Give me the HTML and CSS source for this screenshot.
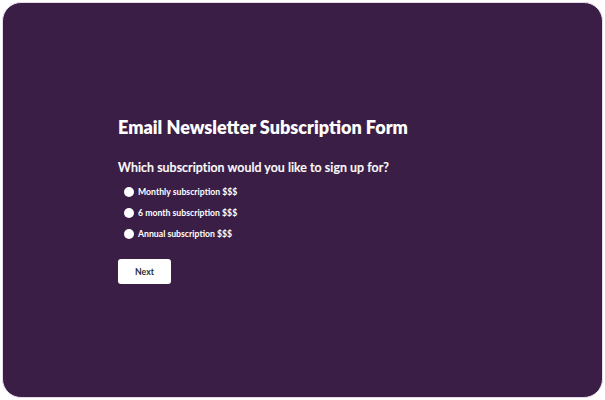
FILE: index.html
```html
<!DOCTYPE html>
<html lang="en">
<head>
<meta charset="utf-8">
<title>Email Newsletter Subscription Form</title>
<link rel="stylesheet" href="styles.css">
</head>
<body>
<div class="frame">
  <form class="survey">
    <h1 class="survey-title">Email Newsletter Subscription Form</h1>
    <h2 class="question">Which subscription would you like to sign up for?</h2>
    <ul class="choices">
      <li class="choice"><span class="dot"></span>Monthly subscription $$$</li>
      <li class="choice"><span class="dot"></span>6 month subscription $$$</li>
      <li class="choice"><span class="dot"></span>Annual subscription $$$</li>
    </ul>
    <button type="button" class="next">Next</button>
  </form>
</div>
</body>
</html>
```
FILE: styles.css
```css
* { box-sizing: border-box; }

html, body {
  margin: 0;
  background: #ffffff;
}

body {
  padding: 2px;
  width: 605px;
  height: 400px;
  font-family: Lato, "Liberation Sans", sans-serif;
}

.frame {
  height: 396px;
  background: #3b1e45;
  border: 1px solid #e6dde9;
  border-radius: 19px;
  padding: 112px 0 0 115px;
}

.survey {
  display: flex;
  flex-direction: column;
  align-items: flex-start;
}

.survey-title {
  margin: 0;
  color: #ffffff;
  font-size: 18px;
  font-weight: 800;
  line-height: 24px;
}

.question {
  margin: 20px 0 0;
  color: #ffffff;
  font-size: 12.4px;
  font-weight: 600;
  line-height: 18px;
  letter-spacing: 0.05px;
  -webkit-text-stroke: 0.2px #ffffff;
}

.choices {
  list-style: none;
  margin: 8px 0 0;
  padding: 0 0 0 6px;
  display: flex;
  flex-direction: column;
  gap: 7px;
}

.choice {
  display: flex;
  align-items: center;
  gap: 4px;
  color: #ffffff;
  font-size: 8.7px;
  font-weight: 700;
  line-height: 14px;
}

.dot {
  width: 10px;
  height: 10px;
  border-radius: 50%;
  background: #ffffff;
}

.next {
  margin-top: 18px;
  width: 53px;
  height: 25px;
  background: #ffffff;
  border: none;
  border-radius: 3px;
  color: #2b2b2b;
  font-family: inherit;
  font-size: 8.7px;
  font-weight: 700;
  padding: 0;
}
```
